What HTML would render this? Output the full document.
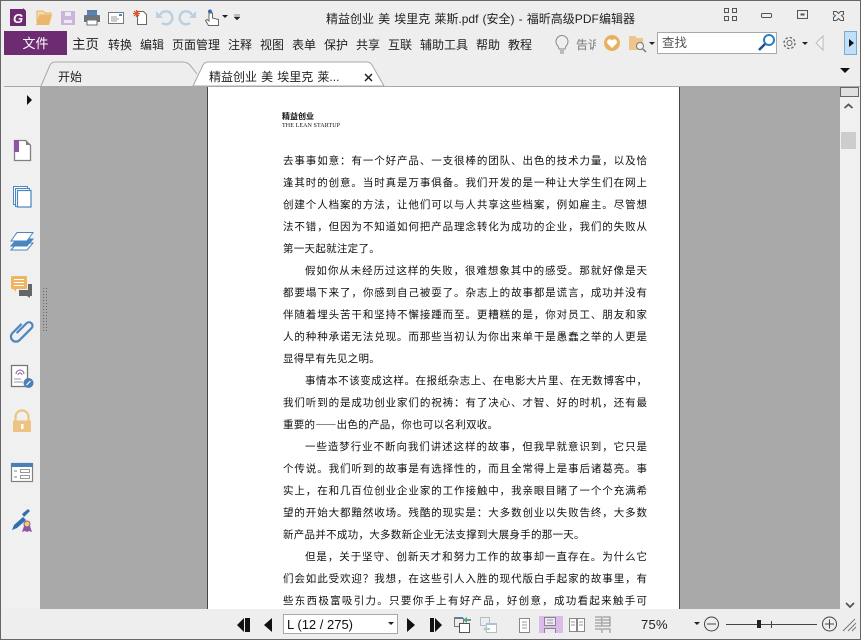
<!DOCTYPE html>
<html lang="zh"><head><meta charset="utf-8"><style>
html,body{margin:0;padding:0}
body{width:861px;height:640px;overflow:hidden;position:relative;background:#eeeeee;font-family:"Liberation Sans","Noto Sans CJK SC",sans-serif;color:#222}
.a{position:absolute;white-space:nowrap}
.m{position:absolute;top:36px;font-size:12px;line-height:18px;color:#222;white-space:nowrap}
.l{position:absolute;left:283px;width:364px;height:16px;line-height:16px;font-size:10.5px;color:#111;text-align:justify;text-align-last:justify;white-space:nowrap;font-family:"Noto Sans CJK SC",sans-serif}
.s{text-align-last:left;letter-spacing:.28px}
.i{padding-left:22px;width:342px}
svg{position:absolute;overflow:visible}
</style></head><body>
<!-- main areas -->
<div class="a" style="left:40px;top:86px;width:800px;height:523px;background:#a9a9a9"></div>
<div class="a" style="left:1px;top:86px;width:39px;height:553px;background:#f0f0f0"></div>
<div class="a" style="left:207px;top:86px;width:473px;height:523px;background:#fff;border-left:1px solid #444;border-right:1px solid #444;box-sizing:border-box"></div>
<div class="a" style="left:840px;top:86px;width:20px;height:523px;background:#f0f0f0"></div>
<div class="a" style="left:4px;top:86px;width:856px;height:1px;background:#a8a8a8"></div>
<div class="a" style="left:0;top:0;width:861px;height:1px;background:#666"></div>
<div class="a" style="left:0;top:0;width:1px;height:640px;background:#666"></div>
<div class="a" style="left:860px;top:0;width:1px;height:640px;background:#666"></div>
<div class="a" style="left:0;top:639px;width:861px;height:1px;background:#666"></div>

<!-- quick access -->
<svg style="left:0;top:0" width="260" height="32">
<path d="M10 9h14l2 2v15H10z" fill="#6d2a72"/><path d="M23 8l3 3h-3z" fill="#6d2a72"/><text x="13" y="23" font-size="13" font-weight="bold" font-style="italic" fill="#fff" font-family="Liberation Sans">G</text>
<path d="M37 11h6l2 2h6v2H40l-3 7z" fill="#f6dcae" stroke="#e5b466" stroke-width="1"/><path d="M36 25l4-10h12l-3 10z" fill="#ecb76a"/>
<path d="M61 11h14v14H61z" fill="#cbb5d8"/><rect x="65" y="12" width="6" height="4" fill="#efe9f2"/><rect x="64" y="20" width="8" height="3" fill="#efe9f2"/>
<rect x="87" y="10" width="10" height="5" fill="#4f87c0"/><path d="M85 15h14a1 1 0 0 1 1 1v6H84v-6a1 1 0 0 1 1-1z" fill="#6f7478"/><rect x="87" y="20" width="10" height="5" fill="#fff" stroke="#6f7478"/><path d="M87 10h10v2H87z" fill="#6f7478" opacity=".5"/>
<rect x="108.500" y="12.500" width="15" height="11" fill="#fff" stroke="#777"/><path d="M111 17h6M111 19h8M111 21h6" stroke="#999"/><rect x="119" y="14" width="3" height="2" fill="#4f87c0"/>
<path d="M137.500 11.500h6l3 3v10h-9z" fill="#fff" stroke="#666"/><path d="M133 13.500h7M136.500 10v7M134 11l5 5M139 11l-5 5" stroke="#e2532d" stroke-width="1.200"/>
<path d="M160 15a6.500 6.500 0 1 1 2 8" fill="none" stroke="#bcd0e4" stroke-width="2.600"/><path d="M156 11v7h7z" fill="#bcd0e4"/>
<path d="M192 15a6.500 6.500 0 1 0 -2 8" fill="none" stroke="#bcd0e4" stroke-width="2.600"/><path d="M196 11v7h-7z" fill="#bcd0e4"/>
<circle cx="210" cy="11.500" r="2" fill="#2f6fb0"/><path d="M209 13v8l-2-1.500-1.500 1 3 5h10v-6l-6-1.500v-5z" fill="#fff" stroke="#666"/>
<path d="M222 15h6l-3 3z" fill="#222"/><path d="M234 15h6M234 17h6l-3 3z" fill="#222" stroke="#222" stroke-width=".5"/>
</svg>
<div class="a" style="left:326px;top:10px;font-size:12px;line-height:18px;color:#222;word-spacing:.8px">精益创业 美 埃里克 莱斯.pdf (安全) - 福昕高级PDF</div>
<div class="a" style="left:599px;top:10px;font-size:12px;line-height:18px;color:#222">编辑器</div>

<!-- window buttons -->
<svg style="left:720px;top:0" width="140" height="32">
<g fill="none" stroke="#555"><rect x="4.500" y="8.500" width="4" height="4"/><rect x="12.500" y="8.500" width="4" height="4"/><rect x="4.500" y="16.500" width="4" height="4"/><rect x="12.500" y="16.500" width="4" height="4"/>
<rect x="41.500" y="13.500" width="10" height="4" rx="1"/><rect x="77.500" y="10.500" width="10" height="8"/><rect x="81" y="14" width="3" height="1"/>
<path d="M113.500 11.500h3l2 2 2-2h3v3l-2 1 2 2v3h-3l-2-2-2 2h-3v-3l2-2-2-1z"/></g>
</svg>

<!-- menu -->
<div class="a" style="left:4px;top:31px;width:63px;height:24px;background:#6d2b72;color:#fff;font-size:13px;line-height:26px;text-align:center">文件</div>
<div class="m" style="left:72px;font-size:13.500px">主页</div>
<div class="m" style="left:108px">转换</div>
<div class="m" style="left:140px">编辑</div>
<div class="m" style="left:172px">页面管理</div>
<div class="m" style="left:228px">注释</div>
<div class="m" style="left:260px">视图</div>
<div class="m" style="left:292px">表单</div>
<div class="m" style="left:324px">保护</div>
<div class="m" style="left:356px">共享</div>
<div class="m" style="left:388px">互联</div>
<div class="m" style="left:420px">辅助工具</div>
<div class="m" style="left:476px">帮助</div>
<div class="m" style="left:508px">教程</div>
<div class="m" style="left:576px;color:#777;width:20px;overflow:hidden">告诉</div>

<svg style="left:545px;top:30px" width="316" height="30">
<path d="M13 16a6 6 0 1 1 8 0l-1 3h-6z" fill="none" stroke="#888"/><path d="M15 21h4M15 23h4" stroke="#888"/>
<circle cx="67" cy="13" r="8" fill="#e9b05f"/><path d="M67 18l-4.500-4.500a2.500 2.500 0 0 1 4.500-3 2.500 2.500 0 0 1 4.500 3z" fill="#fff"/>
<path d="M84 6h6l2 2h6v12H84z" fill="#ecc68d"/><circle cx="95" cy="16" r="3.500" fill="#f4f4f4" stroke="#777"/><path d="M98 19l3 3" stroke="#777" stroke-width="1.500"/>
<path d="M104 12h6l-3 3z" fill="#222"/>
</svg>
<div class="a" style="left:657px;top:32px;width:118px;height:20px;background:#fff;border:1px solid #a8a8a8;font-size:12.500px;line-height:21px;color:#555;text-indent:4px">查找</div>
<svg style="left:757px;top:32px" width="104" height="28">
<circle cx="12" cy="8" r="5" fill="#fff" stroke="#2e7fc0" stroke-width="2"/><path d="M8 12l-6 6" stroke="#1f4f86" stroke-width="2.500"/>
<circle cx="32.500" cy="11" r="2.500" fill="none" stroke="#666"/><circle cx="32.500" cy="11" r="5.500" fill="none" stroke="#666" stroke-width="1.300" stroke-dasharray="2.500 1.800"/>
<path d="M45 10h6l-3 3z" fill="#222"/>
<path d="M66 4l-7 7 7 7z" fill="#f4f4f4" stroke="#bbb"/>
</svg>
<div class="a" style="left:844px;top:31px;width:11px;height:22px;background:#bfe0f8;border:1px solid #7da9cc"></div>
<svg style="left:845px;top:31px" width="14" height="24"><path d="M4 8l5 4-5 4z" fill="#111"/></svg>

<!-- tabs -->
<svg style="left:0;top:60px" width="400" height="27">
<path d="M41 26l9-21q2-3 5-3h128q4 0 7 3l7 9" fill="#eeeeee" stroke="#a8a8a8"/>
<path d="M193 26l10-21q2-3 5-3h159q3 0 5 3l12 21z" fill="#fff" stroke="#a8a8a8"/>
<path d="M365 14l7 7M372 14l-7 7" stroke="#222" stroke-width="1.500"/>
</svg>
<div class="a" style="left:58px;top:68px;font-size:12px;line-height:18px">开始</div>
<div class="a" style="left:209px;top:68px;font-size:12px;line-height:18px;word-spacing:.8px">精益创业 美 埃里克 莱...</div>
<svg style="left:838px;top:66px" width="14" height="10"><path d="M2 2h10l-5 5z" fill="#111"/></svg>

<!-- sidebar -->
<svg style="left:0;top:0" width="52" height="540">
<path d="M27 95l5 5-5 5z" fill="#111"/>
<path d="M14.500 140.500h11l5 5v15h-16z" fill="#fff" stroke="#808080" stroke-width="1.300"/><path d="M26 140l5 5h-5z" fill="#808080"/><path d="M14 140h5v12h-5z" fill="#8e55a5"/>
<g fill="#fff" stroke="#4a86c0"><rect x="13.500" y="186.500" width="14" height="18"/><rect x="15.500" y="188.500" width="14" height="18"/><rect x="17.500" y="190.500" width="13.500" height="16.500" stroke-width="1.200"/></g>
<g stroke="#4a86c0" fill="#fff"><path d="M11 250l6-7h16l-6 7z"/><path d="M11 246l6-7h16l-6 7z" fill="#4a86c0"/><path d="M11 241l6-8.500h16l-6 8.500z"/></g>
<path d="M28 284h4v12h-13v-6h9z" fill="#666"/><path d="M27 296l3 2v-2z" fill="#666"/>
<rect x="11" y="276" width="16" height="13" rx="1" fill="#efb560"/><path d="M14 279.500h10M14 282.500h10M14 285.500h10" stroke="#fff"/><path d="M13 289l3 2.500v-2.500z" fill="#efb560"/>
<g transform="translate(23 331) rotate(45)"><path d="M-3 6V-8a3.500 3.500 0 0 1 7 0V9a5 5 0 0 1-10 0V-4" fill="none" stroke="#4b86c0" stroke-width="2.200"/></g>
<rect x="11.500" y="365.500" width="16" height="21" fill="#fff" stroke="#777" stroke-width="1.300"/><path d="M14 379h7M14 382h9" stroke="#999"/><path d="M16 374a4 4 0 0 1 8 0M18 375a2 2 0 0 1 4 0" fill="none" stroke="#8e55a5"/><circle cx="28.500" cy="383" r="5" fill="#4a7fb8"/><path d="M26.500 385l4-4" stroke="#fff" stroke-width="1.200"/>
<path d="M15.500 421v-4a6.500 6.500 0 0 1 13 0v4" fill="none" stroke="#edc382" stroke-width="2.200"/><rect x="13" y="420.500" width="18" height="11.500" rx="1" fill="#edc382"/><rect x="21" y="424" width="2.500" height="5" fill="#fff"/>
<rect x="11.500" y="463.500" width="21" height="18" fill="#fff" stroke="#808080" stroke-width="1.200"/><rect x="11" y="463" width="22" height="4" fill="#4a7fb8"/><path d="M14 471h3M14 477h3" stroke="#808080"/><rect x="20.500" y="469.500" width="9" height="3" fill="none" stroke="#999"/><rect x="20.500" y="475.500" width="9" height="3" fill="none" stroke="#999"/>
<path d="M12 530l2-5 9-8 3 3-9 8zM22 514l6-5 2 2-6 6z" fill="#2f6fb0"/><path d="M22 532l2-6h6l2 6-3-1-2 1-2-1z" fill="#8e55a5"/><circle cx="27" cy="524" r="3" fill="#f0d060" stroke="#8e55a5"/>
</svg>
<svg style="left:43px;top:288px" width="5" height="44"><path d="M.5 0v44M3.500 0v44" stroke="#666" stroke-dasharray="1 2"/></svg>

<!-- page content -->
<div class="a" style="left:282px;top:112px;font-size:8px;line-height:10px;font-weight:bold;color:#111;font-family:'Noto Sans CJK SC',sans-serif">精益创业</div>
<div class="a" style="left:282px;top:122px;font-size:6px;line-height:8px;color:#111;letter-spacing:.1px;font-family:'Liberation Serif',serif">THE LEAN STARTUP</div>

<div class="l" style="top:153px">去事事如意：有一个好产品、一支很棒的团队、出色的技术力量，以及恰</div>
<div class="l" style="top:175px">逢其时的创意。当时真是万事俱备。我们开发的是一种让大学生们在网上</div>
<div class="l" style="top:197px">创建个人档案的方法，让他们可以与人共享这些档案，例如雇主。尽管想</div>
<div class="l" style="top:219px">法不错，但因为不知道如何把产品理念转化为成功的企业，我们的失败从</div>
<div class="l s" style="top:241px">第一天起就注定了。</div>
<div class="l i" style="top:263px">假如你从未经历过这样的失败，很难想象其中的感受。那就好像是天</div>
<div class="l" style="top:285px">都要塌下来了，你感到自己被耍了。杂志上的故事都是谎言，成功并没有</div>
<div class="l" style="top:307px">伴随着埋头苦干和坚持不懈接踵而至。更糟糕的是，你对员工、朋友和家</div>
<div class="l" style="top:329px">人的种种承诺无法兑现。而那些当初认为你出来单干是愚蠢之举的人更是</div>
<div class="l s" style="top:351px">显得早有先见之明。</div>
<div class="l i" style="top:373px">事情本不该变成这样。在报纸杂志上、在电影大片里、在无数博客中，</div>
<div class="l" style="top:395px">我们听到的是成功创业家们的祝祷：有了决心、才智、好的时机，还有最</div>
<div class="l s" style="top:417px">重要的——出色的产品，你也可以名利双收。</div>
<div class="l i" style="top:439px">一些造梦行业不断向我们讲述这样的故事，但我早就意识到，它只是</div>
<div class="l" style="top:461px">个传说。我们听到的故事是有选择性的，而且全常得上是事后诸葛亮。事</div>
<div class="l" style="top:483px">实上，在和几百位创业企业家的工作接触中，我亲眼目睹了一个个充满希</div>
<div class="l" style="top:505px">望的开始大都黯然收场。残酷的现实是：大多数创业以失败告终，大多数</div>
<div class="l s" style="top:527px">新产品并不成功，大多数新企业无法支撑到大展身手的那一天。</div>
<div class="l i" style="top:549px">但是，关于坚守、创新天才和努力工作的故事却一直存在。为什么它</div>
<div class="l" style="top:571px">们会如此受欢迎？我想，在这些引人入胜的现代版白手起家的故事里，有</div>
<div class="l" style="top:593px">些东西极富吸引力。只要你手上有好产品，好创意，成功看起来触手可</div>

<!-- scrollbar -->
<div class="a" style="left:840px;top:87px;width:17px;height:8px;background:#e0e0e0;border:1px solid #666"></div>
<svg style="left:838px;top:101px" width="20" height="10"><path d="M6.500 7l4-3.500 4 3.500" fill="none" stroke="#555" stroke-width="1.800"/></svg>
<div class="a" style="left:841px;top:132px;width:15px;height:17px;background:#cdcdcd"></div>
<svg style="left:840px;top:601px" width="20" height="10"><path d="M6 2l4 4 4-4" fill="none" stroke="#555" stroke-width="1.800"/></svg>

<!-- bottom bar -->
<div class="a" style="left:1px;top:609px;width:859px;height:30px;background:#eeeeee"></div>
<svg style="left:0;top:0" width="520" height="640">
<path d="M244 618l-7 7 7 7zM245 618h5v14h-5z" fill="#111"/><path d="M272 618l-8 7 8 7z" fill="#111"/>
<path d="M407 618l8 7-8 7z" fill="#111"/><path d="M430 618h4v14h-4zM435 618l7 7-7 7z" fill="#111"/>
<path d="M454 618h9" stroke="#4a86c0" stroke-width="2"/><rect x="454.500" y="618.500" width="9" height="8" fill="none" stroke="#777"/><rect x="459.500" y="623.500" width="10" height="9" fill="#fff" stroke="#555"/><path d="M463 620l4-3v2h4v2h-4v2z" fill="#5aa08c"/>
<rect x="480.500" y="617.500" width="9" height="8" fill="none" stroke="#bbb"/><rect x="486.500" y="623.500" width="10" height="9" fill="#fff" stroke="#bbb"/><path d="M487 624h9" stroke="#a7c4de" stroke-width="2"/><path d="M487 626l-4 3 4 3v-2h3v-2h-3z" fill="#a8cfc4"/>
</svg>
<div class="a" style="left:283px;top:614px;width:113px;height:18px;background:#fff;border:1px solid #a8a8a8;font-size:13px;line-height:19px;color:#111;text-indent:3px">L (12 / 275)</div>
<svg style="left:387px;top:620px" width="10" height="8"><path d="M1 2h6l-3 3z" fill="#222"/></svg>

<div class="a" style="left:539px;top:616px;width:24px;height:17px;background:#d9bde8"></div>
<svg style="left:515px;top:612px" width="100" height="26">
<rect x="4.500" y="6.500" width="10" height="14" fill="#fff" stroke="#888"/><path d="M7 10h5M7 13h5M7 16h5" stroke="#999"/>
<rect x="29.500" y="5.500" width="11" height="8" fill="#efe6f5" stroke="#888"/><path d="M32 8h6M32 11h6" stroke="#999"/><path d="M29.500 21v-4.500h11V21" fill="#efe6f5" stroke="#888"/>
<rect x="54.500" y="6.500" width="7" height="13" fill="#fff" stroke="#888"/><rect x="62.500" y="6.500" width="7" height="13" fill="#fff" stroke="#888"/><path d="M56 10h4M56 13h4M64 10h4M64 13h4" stroke="#999"/>
<path d="M80 5h7v9h-7M88 5h7v9h-7M80 8h7M80 11h7M88 8h7M88 11h7M80 17h7v4M88 17h7v4" fill="none" stroke="#888"/>
</svg>
<div class="a" style="left:641px;top:615px;font-size:13px;line-height:19px;color:#222;letter-spacing:.3px">75%</div>
<svg style="left:690px;top:612px" width="170" height="26">
<path d="M4 10h6l-3 3z" fill="#222"/>
<circle cx="21.500" cy="12" r="7" fill="none" stroke="#444"/><path d="M17 12h9" stroke="#444"/>
<path d="M36 12.500h91" stroke="#444"/><rect x="67" y="8" width="4" height="8" fill="#222"/><path d="M81.500 9v7" stroke="#444"/>
<circle cx="139.500" cy="12" r="7" fill="none" stroke="#444"/><path d="M135 12h9M139.500 7.500v9" stroke="#444"/>
<path d="M153 19l12-12M158 19l8-8M162 19l4-4" stroke="#777"/>
</svg>
</body></html>
